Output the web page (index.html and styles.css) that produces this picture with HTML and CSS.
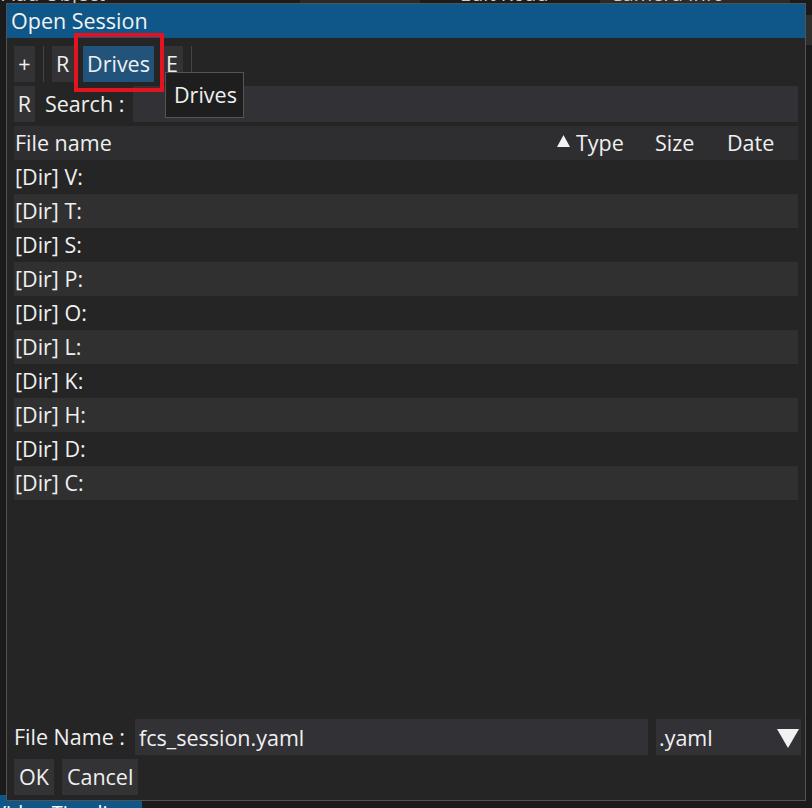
FILE: index.html
```html
<!DOCTYPE html>
<html>
<head>
<meta charset="utf-8">
<link rel="stylesheet" href="styles.css">
</head>
<body>
<div class="desk">
  <div class="top-strip">
    <span class="ts-a">Add Object</span>
    <span class="ts-b"></span>
    <span class="ts-c">Edit Road</span>
    <span class="ts-d">Camera Info</span>
  </div>
  <div class="side-right"></div>
  <div class="bottom-tab">Video Timeline</div>

  <div class="window">
    <div class="titlebar">Open Session</div>
    <div class="content">
      <div class="toolbar">
        <span class="btn">+</span>
        <span class="sep"></span>
        <span class="btn btn-r">R</span>
        <span class="btn btn-active">Drives</span>
        <span class="btn btn-e">E</span>
        <span class="sep"></span>
      </div>
      <div class="search-row">
        <span class="btn">R</span>
        <span class="label">Search :</span>
        <span class="input"></span>
      </div>
      <div class="table">
        <div class="thead">
          <span class="c-name">File name</span>
          <span class="c-type"><svg class="sort" width="13" height="12" viewBox="0 0 13 12"><polygon points="6.5,0 13,12 0,12" fill="#f2f2f2"/></svg>Type</span>
          <span class="c-size">Size</span>
          <span class="c-date">Date</span>
        </div>
        <div class="row">[Dir] V:</div>
        <div class="row alt">[Dir] T:</div>
        <div class="row">[Dir] S:</div>
        <div class="row alt">[Dir] P:</div>
        <div class="row">[Dir] O:</div>
        <div class="row alt">[Dir] L:</div>
        <div class="row">[Dir] K:</div>
        <div class="row alt">[Dir] H:</div>
        <div class="row">[Dir] D:</div>
        <div class="row alt">[Dir] C:</div>
      </div>
      <div class="file-row">
        <span class="label">File Name :</span>
        <span class="input fname">fcs_session.yaml</span>
        <span class="combo"><span>.yaml</span><svg width="22" height="19" viewBox="0 0 22 19"><polygon points="0,0 22,0 11,19" fill="#f2f2f2"/></svg></span>
      </div>
      <div class="btn-row">
        <span class="btn">OK</span>
        <span class="btn">Cancel</span>
      </div>
    </div>
    <div class="highlight"></div>
    <div class="tooltip">Drives</div>
  </div>
</div>
</body>
</html>
```
FILE: styles.css
```css
* { box-sizing: border-box; }
html, body {
  margin: 0;
  padding: 0;
  background: #1b1b1b;
}
body {
  font-family: "Open Sans", "Noto Sans", sans-serif;
  font-size: 21.5px;
  color: #f0f0f0;
}
.desk {
  position: relative;
  width: 812px;
  height: 808px;
  overflow: hidden;
}
.top-strip {
  height: 3px;
  display: flex;
  overflow: hidden;
  background: #1b1b1b;
}
.top-strip span {
  display: block;
  height: 20px;
  line-height: 20px;
  margin-top: -16px;
  font-size: 20px;
  color: #cfcfcf;
  white-space: nowrap;
  overflow: hidden;
}
.ts-a { width: 300px; padding-left: 2px; }
.ts-b { width: 120px; background: #2a2a2a; }
.ts-c { width: 180px; padding-left: 40px; }
.ts-d { width: 190px; padding-left: 10px; background: #2b2b2b; }
.side-right {
  position: absolute;
  right: 0;
  top: 15px;
  width: 7px;
  height: 30px;
  background: #2f2f2f;
}
.bottom-tab {
  position: absolute;
  left: 0;
  top: 795px;
  width: 142px;
  height: 20px;
  background: #0f5788;
  color: #ffffff;
  font-size: 20px;
  line-height: 36px;
  text-indent: -6px;
  white-space: nowrap;
  overflow: hidden;
}
.window {
  position: absolute;
  left: 6px;
  top: 3px;
  width: 800px;
  height: 798px;
  border: 1px solid #535353;
  background: #252525;
  display: flex;
  flex-direction: column;
}
.titlebar {
  height: 34px;
  background: #0f5788;
  color: #f2f2f2;
  padding-left: 4px;
  display: flex;
  align-items: center;
  line-height: 1;
  padding-bottom: 1px;
  flex: none;
}
.content {
  flex: 1;
  display: flex;
  flex-direction: column;
  gap: 4px;
  padding: 8px 7px 5px 7px;
  min-height: 0;
}
.toolbar, .search-row, .btn-row {
  height: 36px;
  display: flex;
  align-items: stretch;
  flex: none;
}
.btn {
  display: flex;
  align-items: center;
  padding: 0 4px;
  background: #333335;
  color: #f0f0f0;
  line-height: 1;
  padding-bottom: 1px;
}
.toolbar .btn:first-child { width: 21px; justify-content: center; padding: 0 0 1px 0; }
.sep {
  width: 1px;
  margin: 0 8px 0 8px;
  background: #444446;
}
.btn-r { width: 22px; }
.btn-active {
  margin-left: 9px;
  width: 71px;
  justify-content: center;
  background: #22537b;
}
.btn-e { margin-left: 7px; width: 22px; justify-content: center; padding: 0 0 1px 0; }
.search-row .btn { width: 21px; justify-content: center; padding: 0 0 1px 0; }
.label {
  display: flex;
  align-items: center;
  line-height: 1;
  padding-bottom: 1px;
  white-space: nowrap;
}
.search-row .label { margin-left: 10px; width: 88px; }
.input {
  flex: 1;
  background: #323236;
  display: flex;
  align-items: center;
  line-height: 1;
  padding: 0 4px 0 4px;
}
.table {
  flex: 1;
  display: flex;
  flex-direction: column;
}
.thead {
  height: 34px;
  background: #2e2e30;
  display: grid;
  grid-template-columns: 1fr 98px 72px 76px;
  align-items: center;
  line-height: 1;
}
.c-name { padding-left: 1px; }
.c-type { padding-left: 5px; display: flex; align-items: center; }
.c-type .sort { margin-top: -5px; margin-right: 6px; }
.c-size, .c-date { padding-left: 5px; }
.row {
  height: 34px;
  display: flex;
  align-items: center;
  padding-left: 1px;
  line-height: 1;
}
.row.alt { background: #303030; }
.file-row {
  height: 36px;
  display: flex;
  align-items: stretch;
  flex: none;
}
.file-row .label { width: 121px; }
.fname { flex: none; width: 513px; padding-top: 2px; }
.combo {
  margin-left: 8px;
  width: 145px;
  margin-right: -4px;
  background: #323236;
  display: flex;
  align-items: center;
  justify-content: space-between;
  padding: 2px 2px 0 3px;
  line-height: 1;
}
.btn-row { gap: 8px; }
.btn-row .btn { padding: 0 5px 1px 5px; }
.highlight {
  position: absolute;
  left: 67px;
  top: 29px;
  width: 90px;
  height: 59px;
  border: 4px solid #e3141f;
}
.tooltip {
  position: absolute;
  left: 158px;
  top: 68px;
  width: 79px;
  height: 46px;
  background: #1e1e1e;
  border: 1px solid #555555;
  display: flex;
  align-items: center;
  padding-left: 8px;
  line-height: 1;
  padding-bottom: 1px;
}
```
